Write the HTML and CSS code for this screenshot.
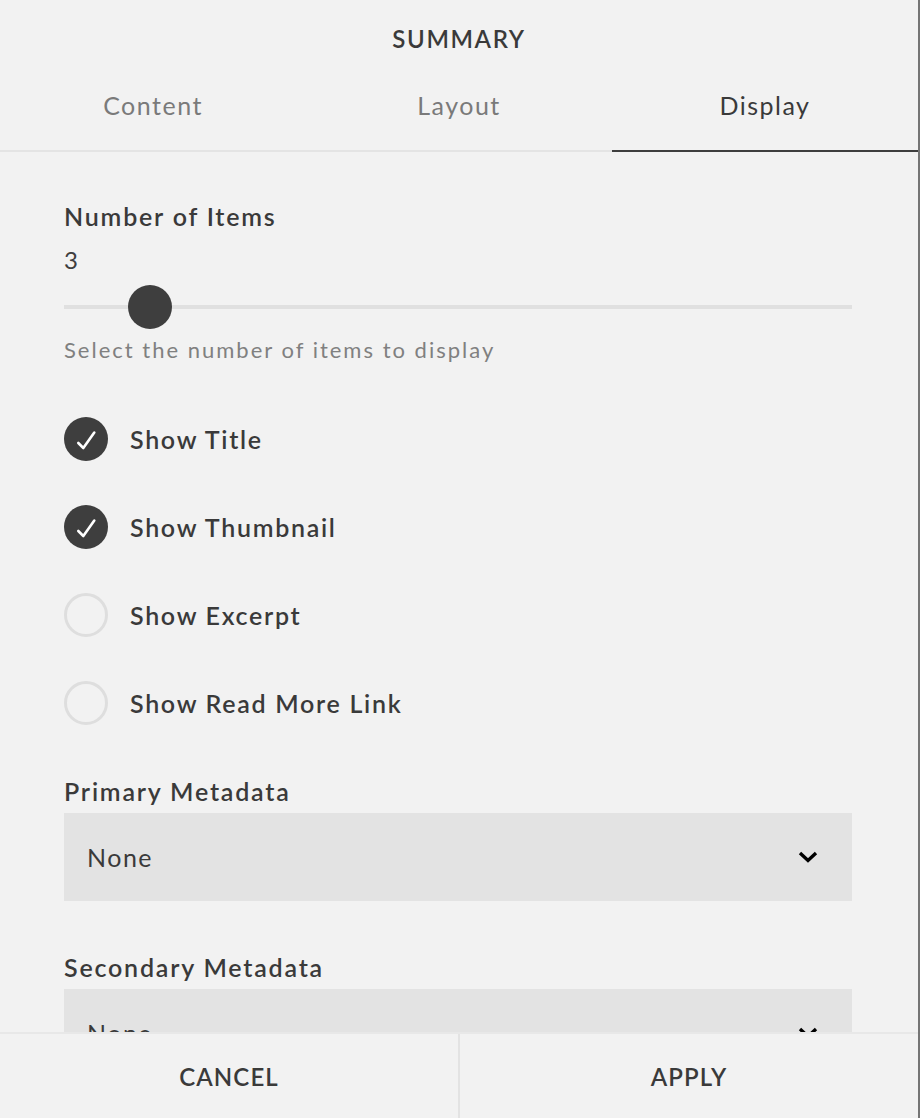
FILE: index.html
```html
<!DOCTYPE html>
<html lang="en">
<head>
<meta charset="utf-8">
<title>Summary</title>
<link rel="stylesheet" href="styles.css">
</head>
<body>
<div class="panel">
  <header class="head">
    <div class="title">SUMMARY</div>
    <nav class="tabs">
      <div class="tab">Content</div>
      <div class="tab">Layout</div>
      <div class="tab active">Display</div>
    </nav>
  </header>
  <main class="body">
    <div class="field-label">Number of Items</div>
    <div class="value">3</div>
    <div class="slider">
      <div class="track"></div>
      <div class="thumb" style="left: 64px"></div>
    </div>
    <div class="help">Select the number of items to display</div>

    <ul class="checks">
      <li class="check">
        <svg class="box" viewBox="0 0 44 44" width="44" height="44"><circle cx="22" cy="22" r="22" fill="#3e3e3e"/><path d="M14.3 26 L19.3 31 L30.3 15.5" fill="none" stroke="#fff" stroke-width="2.6" stroke-linecap="round" stroke-linejoin="round"/></svg>
        <span>Show Title</span>
      </li>
      <li class="check">
        <svg class="box" viewBox="0 0 44 44" width="44" height="44"><circle cx="22" cy="22" r="22" fill="#3e3e3e"/><path d="M14.3 26 L19.3 31 L30.3 15.5" fill="none" stroke="#fff" stroke-width="2.6" stroke-linecap="round" stroke-linejoin="round"/></svg>
        <span>Show Thumbnail</span>
      </li>
      <li class="check">
        <svg class="box" viewBox="0 0 44 44" width="44" height="44"><circle cx="22" cy="22" r="20.5" fill="none" stroke="#dedede" stroke-width="3"/></svg>
        <span>Show Excerpt</span>
      </li>
      <li class="check">
        <svg class="box" viewBox="0 0 44 44" width="44" height="44"><circle cx="22" cy="22" r="20.5" fill="none" stroke="#dedede" stroke-width="3"/></svg>
        <span>Show Read More Link</span>
      </li>
    </ul>

    <div class="field-label meta">Primary Metadata</div>
    <div class="select">
      <span>None</span>
      <svg class="chev" viewBox="0 0 20 12" width="20" height="12"><path d="M2 2 L10 9.5 L18 2" fill="none" stroke="#000" stroke-width="3.4"/></svg>
    </div>

    <div class="field-label meta">Secondary Metadata</div>
    <div class="select">
      <span>None</span>
      <svg class="chev" viewBox="0 0 20 12" width="20" height="12"><path d="M2 2 L10 9.5 L18 2" fill="none" stroke="#000" stroke-width="3.4"/></svg>
    </div>
  </main>
  <footer class="foot">
    <div class="btn">CANCEL</div>
    <div class="btn">APPLY</div>
  </footer>
</div>
</body>
</html>
```

FILE: styles.css
```css
* { box-sizing: border-box; }
html, body { margin: 0; padding: 0; }
body {
  background: #f2f2f2;
  font-family: Lato, "Open Sans", "Liberation Sans", sans-serif;
  color: #3e3e3e;
}
.panel {
  width: 920px;
  height: 1118px;
  display: flex;
  flex-direction: column;
  border-right: 2px solid #757575;
  background: #f2f2f2;
  overflow: hidden;
}
.head { flex: none; }
.title {
  height: 78px;
  line-height: 78px;
  text-align: center;
  font-size: 24px;
  font-weight: 600;
  letter-spacing: 1.6px;
  color: #3a3a3a;
}
.tabs {
  display: grid;
  grid-template-columns: 1fr 1fr 1fr;
}
.tab {
  height: 74px;
  line-height: 55px;
  text-align: center;
  font-size: 25px;
  letter-spacing: 1.5px;
  color: #7a7a7a;
  border-bottom: 2px solid #e4e4e4;
}
.tab.active {
  color: #3a3a3a;
  border-bottom-color: #3e3e3e;
}
.body {
  flex: 1;
  min-height: 0;
  overflow: hidden;
  padding: 49px 66px 0 64px;
}
.field-label {
  font-size: 25px;
  font-weight: 600;
  line-height: 30px;
  letter-spacing: 1.8px;
  color: #3a3a3a;
}
.value {
  margin-top: 14px;
  font-size: 24px;
  line-height: 30px;
}
.slider {
  position: relative;
  height: 44px;
  margin-top: 10px;
}
.track {
  position: absolute;
  left: 0;
  right: 0;
  top: 20px;
  height: 4px;
  background: #e0e0e0;
}
.thumb {
  position: absolute;
  top: 0;
  width: 44px;
  height: 44px;
  border-radius: 50%;
  background: #3e3e3e;
}
.help {
  margin-top: 6px;
  font-size: 22px;
  line-height: 30px;
  letter-spacing: 2px;
  color: #808080;
}
.checks {
  list-style: none;
  margin: 52px 0 0;
  padding: 0;
  display: flex;
  flex-direction: column;
  gap: 44px;
}
.check {
  display: flex;
  align-items: center;
  gap: 22px;
  height: 44px;
  font-size: 25px;
  font-weight: 600;
  letter-spacing: 1.7px;
  color: #3a3a3a;
}
.box { flex: none; display: block; }
.meta { margin-top: 51px; }
.select {
  margin-top: 7px;
  height: 88px;
  background: #e3e3e3;
  display: flex;
  align-items: center;
  justify-content: space-between;
  padding: 0 34px 0 23px;
  font-size: 25px;
  letter-spacing: 1.5px;
  color: #3a3a3a;
}
.chev { display: block; }
.foot {
  flex: none;
  height: 86px;
  display: grid;
  grid-template-columns: 458px 1fr;
  border-top: 2px solid #e8e8e8;
  background: #f2f2f2;
}
.btn {
  display: flex;
  align-items: center;
  justify-content: center;
  font-size: 24px;
  font-weight: 600;
  color: #3a3a3a;
  letter-spacing: 1.1px;
}
.btn + .btn { border-left: 2px solid #e3e3e3; }
```
